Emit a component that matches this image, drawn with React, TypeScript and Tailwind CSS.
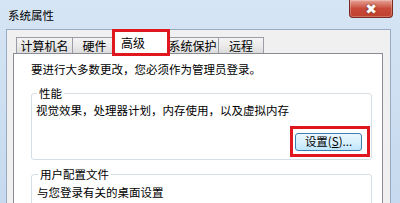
import React from "react";

const font = { fontFamily: '"Noto Sans CJK SC", "Noto Sans", sans-serif' };

function Tab({ label, w, selected }: { label: string; w: number; selected?: boolean }) {
  if (selected) {
    return (
      <div
        className="relative z-10 -mx-[2px] -mb-[1px] flex h-[23px] items-start justify-start border border-b-0 border-[#898c95] bg-white pl-[6px] pt-[4px] text-[12px] leading-[14px] text-black"
        style={{ width: w }}
      >
        {label}
        <div className="absolute -left-[3px] -right-[3px] -top-[3px] -bottom-[2px] border-[3px] border-[#e0171f]" />
      </div>
    );
  }
  return (
    <div
      className="flex h-[16px] items-center justify-center border border-b-0 border-r-0 border-[#9a9da5] bg-gradient-to-b from-[#f4f4f4] via-[#ebebeb] to-[#dcdcdc] text-[12px] leading-[14px] text-black last:border-r"
      style={{ width: w }}
    >
      {label}
    </div>
  );
}

export default function App() {
  return (
    <div
      className="relative flex h-[203px] w-[400px] flex-col overflow-hidden bg-gradient-to-b from-[#d6e5f4] via-[#cddff1] to-[#c6d9ee]"
      style={font}
    >
      {/* title bar */}
      <div className="flex h-[29px] shrink-0 items-start">
        <div className="pl-[8px] pt-[8px] text-[11.5px] leading-[14px] text-black">系统属性</div>
        <div className="ml-auto mr-[7px] flex h-[18px] w-[44px] items-center justify-center rounded-b-[4px] border border-t-0 border-[#7a2a22] bg-gradient-to-b from-[#e6a396] via-[#c84a3b] to-[#c0402e] shadow-[inset_0_0_0_1px_rgba(255,255,255,0.25)]">
          <span className="text-[14px] font-bold leading-none text-white [text-shadow:0_0_2px_#5a1a12]" style={{ fontFamily: '"DejaVu Sans", sans-serif' }}>
            ✖
          </span>
        </div>
      </div>

      {/* client area */}
      <div className="ml-[6px] mr-[9px] flex flex-1 flex-col border border-b-0 border-[#98abc2] bg-[#f0f0f0] pl-[6px] pr-[7px]">
        {/* tabs */}
        <div className="flex items-end pl-[3px] pt-[1px]">
          <Tab label="计算机名" w={56} />
          <Tab label="硬件" w={44} />
          <Tab label="高级" w={54} selected />
          <Tab label="系统保护" w={52} />
          <Tab label="远程" w={46} />
        </div>

        {/* panel */}
        <div className="flex flex-1 flex-col border border-b-0 border-[#898c95] bg-white pl-[17px] pr-[10px] pt-[8px] text-[11.5px] leading-[14px] text-black">
          <div>要进行大多数更改，您必须作为管理员登录。</div>

          <fieldset className="mt-[10px] rounded-[3px] border border-[#d5dfe5] pb-[8px] pl-[4px] pr-[9px]">
            <legend className="ml-[1px] px-[2px]">性能</legend>
            <div className="pt-[3px]">视觉效果，处理器计划，内存使用，以及虚拟内存</div>
            <div className="mt-[16px] flex justify-end">
              <div className="relative">
                <div className="flex h-[18px] w-[67px] items-center justify-center rounded-[3px] border border-[#3c7fb1] bg-gradient-to-b from-[#eaf6fd] via-[#d9f0fc] to-[#bee6fd] text-[11.5px] leading-none">
                  设置(<span className="underline">S</span>)...
                </div>
                <div className="absolute -left-[5px] -right-[8px] -top-[7px] -bottom-[6px] border-[3px] border-[#e0171f]" />
              </div>
            </div>
          </fieldset>

          <fieldset className="mt-[7px] rounded-[3px] border border-[#d5dfe5] pl-[5px] pb-[8px]">
            <legend className="ml-[1px] px-[2px]">用户配置文件</legend>
            <div className="pt-[4px]">与您登录有关的桌面设置</div>
          </fieldset>
        </div>
      </div>
    </div>
  );
}
